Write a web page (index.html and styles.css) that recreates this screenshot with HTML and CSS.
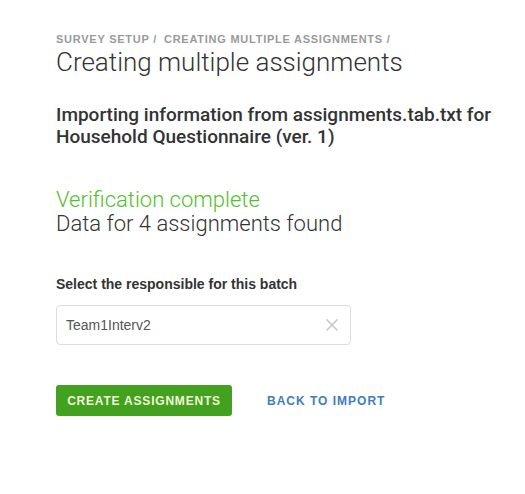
FILE: index.html
```html
<!DOCTYPE html>
<html>
<head>
<meta charset="utf-8">
<link rel="stylesheet" href="styles.css">
</head>
<body>
<div class="page">
  <div class="breadcrumbs">
    <span>Survey setup /</span>
    <span>Creating multiple assignments /</span>
  </div>
  <h1 class="title">Creating multiple assignments</h1>
  <h3 class="importing">Importing information from assignments.tab.txt for Household Questionnaire (ver. 1)</h3>
  <div class="verification">
    <div class="ok">Verification complete</div>
    <div class="found">Data for 4 assignments found</div>
  </div>
  <label class="label">Select the responsible for this batch</label>
  <div class="select">
    <span class="value">Team1Interv2</span>
    <svg class="clear" width="14" height="14" viewBox="0 0 14 14"><path d="M1.5 1.5 L12.5 12.5 M12.5 1.5 L1.5 12.5" stroke="#c8c8c8" stroke-width="1.6" fill="none"/></svg>
  </div>
  <div class="actions">
    <button class="btn-create">Create assignments</button>
    <a class="btn-back">Back to import</a>
  </div>
</div>
</body>
</html>
```
FILE: styles.css
```css
html, body { margin: 0; padding: 0; background: #fff; }
.page { padding: 31px 0 0 56px; width: 450px; }
.breadcrumbs {
  font-family: "Liberation Sans", Arial, sans-serif;
  font-weight: bold;
  font-size: 11px;
  letter-spacing: 0.75px;
  text-transform: uppercase;
  color: #9a9a9a;
  line-height: 16px;
  display: flex;
  gap: 7px;
}
.title {
  font-family: Roboto, sans-serif;
  font-weight: 300;
  font-size: 26px;
  line-height: 30px;
  color: #333;
  margin: 0;
}
.importing {
  font-family: Roboto, sans-serif;
  font-weight: 500;
  font-size: 19px;
  line-height: 22px;
  color: #333;
  margin: 27px 0 0 0;
}
.verification {
  font-family: Roboto, sans-serif;
  font-weight: 300;
  font-size: 22px;
  line-height: 24px;
  margin-top: 40px;
}
.ok { color: #52c12c; }
.found { color: #333; }
.label {
  display: block;
  font-family: "Liberation Sans", Arial, sans-serif;
  font-weight: bold;
  font-size: 14px;
  color: #333;
  margin-top: 39px;
  line-height: 18px;
}
.select {
  margin-top: 12px;
  height: 38px;
  border: 1px solid #ddd;
  border-radius: 4px;
  display: flex;
  align-items: center;
  justify-content: space-between;
  padding: 0 11px 0 9px;
  box-sizing: content-box;
  width: 273px;
}
.value {
  font-family: "Liberation Sans", Arial, sans-serif;
  font-size: 14px;
  color: #555;
}
.actions {
  margin-top: 40px;
  display: flex;
  align-items: center;
  gap: 35px;
}
.btn-create {
  background: #42a11f;
  color: #f2f7d8;
  border: none;
  border-radius: 3px;
  height: 31px;
  width: 176px;
  padding: 0;
  font-family: "Liberation Sans", Arial, sans-serif;
  font-weight: bold;
  font-size: 12px;
  letter-spacing: 0.8px;
  text-transform: uppercase;
}
.btn-back {
  font-family: "Liberation Sans", Arial, sans-serif;
  font-weight: bold;
  font-size: 12px;
  letter-spacing: 1px;
  text-transform: uppercase;
  color: #3f7dbf;
}
```
